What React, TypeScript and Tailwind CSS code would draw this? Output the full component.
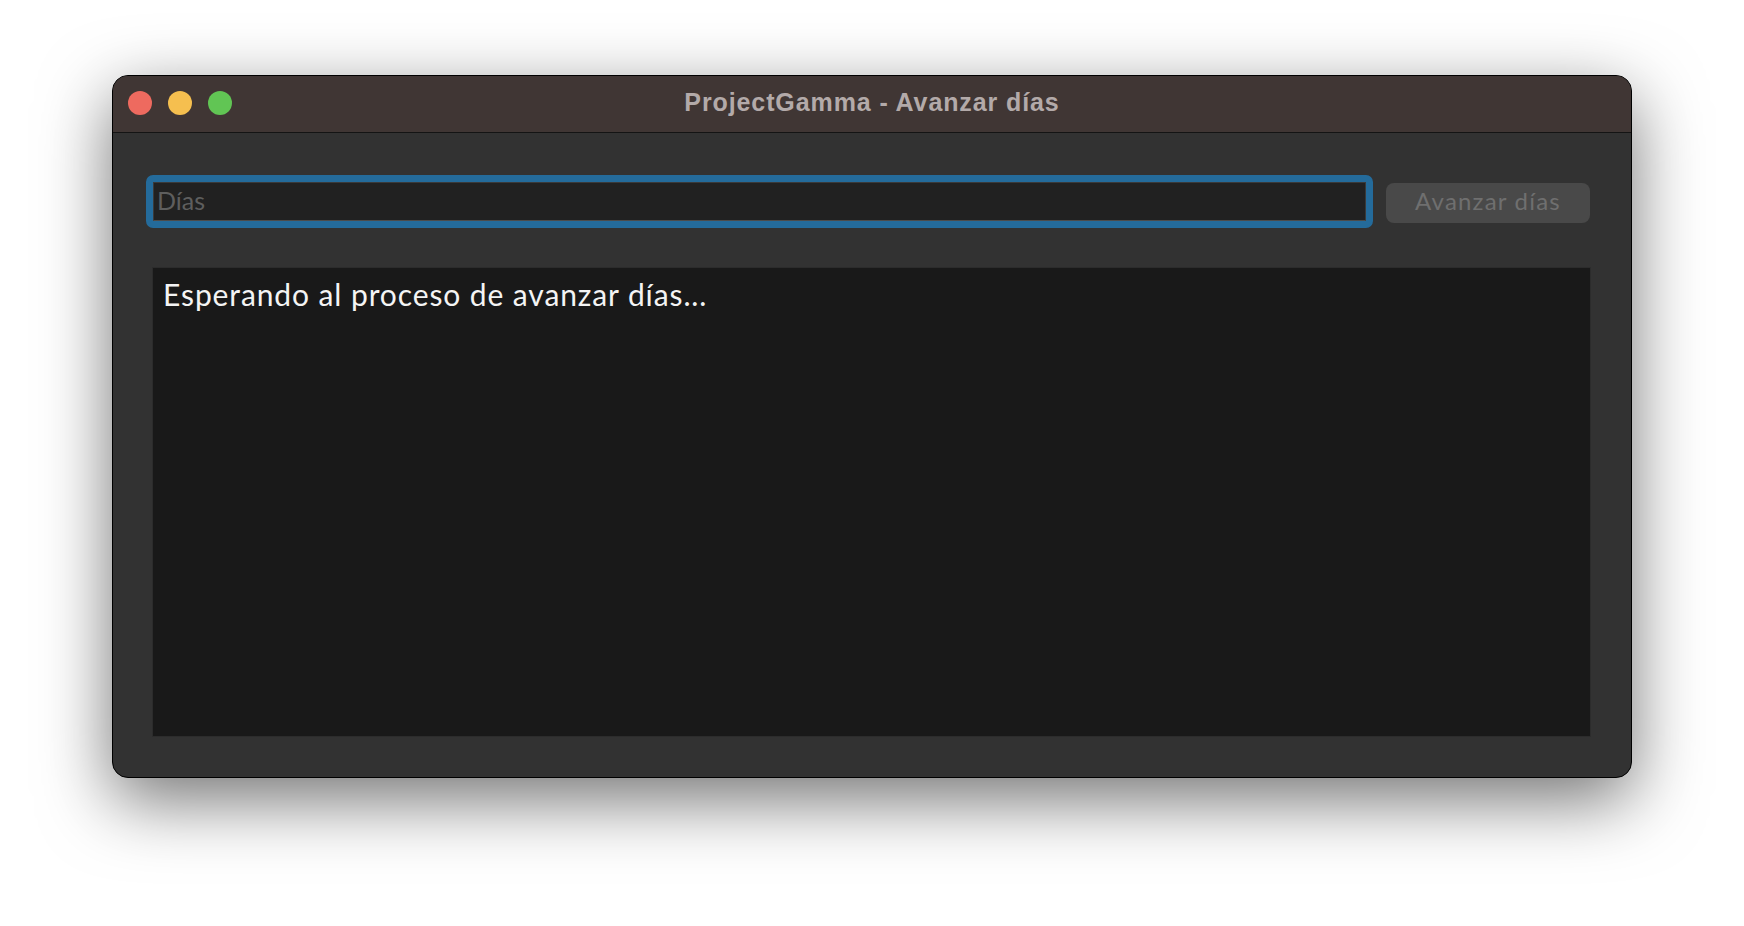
import { useState } from 'react';

export default function App() {
  const [dias, setDias] = useState('');

  return (
    <div className="w-[1744px] h-[926px] bg-white pl-[112px] pt-[75px] overflow-hidden">
      <div className="w-[1520px] h-[703px] rounded-[16px] border border-black bg-[#323232] shadow-[0_22px_70px_rgba(0,0,0,0.55)] overflow-hidden flex flex-col">
        {/* title bar */}
        <div className="relative h-[57px] shrink-0 bg-[#403634] border-b border-[#141414] flex items-center justify-center">
          <div className="absolute left-[15px] top-[15px] flex gap-[16px]">
            <div className="w-[24px] h-[24px] rounded-full bg-[#ee6a5f]" />
            <div className="w-[24px] h-[24px] rounded-full bg-[#f5bf4f]" />
            <div className="w-[24px] h-[24px] rounded-full bg-[#61c554]" />
          </div>
          <span className="font-['Liberation_Sans',Arial,sans-serif] font-bold text-[25px] text-[#b3aaa9] tracking-[0.9px] -mt-[2px]">
            ProjectGamma - Avanzar días
          </span>
        </div>

        {/* body */}
        <div className="flex-1 flex flex-col pt-[42px] pb-[40px] font-['Lato','Open_Sans',sans-serif]">
          <div className="flex items-center pl-[33px] pr-[41px] gap-[13px]">
            <div className="flex-1 border-[7px] border-[#246b9b] rounded-[7px]">
              <input
                value={dias}
                onChange={(e) => setDias(e.target.value)}
                placeholder="Días"
                className="w-full h-[39px] bg-[#212121] border border-[#3a3a3a] border-b-[#4c4c4c] pl-[3px] pb-[3px] text-[25px] text-[#dddddd] placeholder:text-[#5e5e5e] outline-none"
              />
            </div>
            <button className="w-[204px] h-[40px] mt-[3px] pb-[4px] rounded-[8px] bg-[#494949] text-[24px] tracking-[1.2px] text-[#6f6f6f]">
              Avanzar días
            </button>
          </div>

          <div className="flex-1 mt-[39px] ml-[39px] mr-[40px] bg-[#191919] border border-[#2c2c2c] pl-[10px] pt-[4px]">
            <p className="text-[30px] tracking-[0.9px] text-[#f4f4f4]">Esperando al proceso de avanzar días...</p>
          </div>
        </div>
      </div>
    </div>
  );
}
